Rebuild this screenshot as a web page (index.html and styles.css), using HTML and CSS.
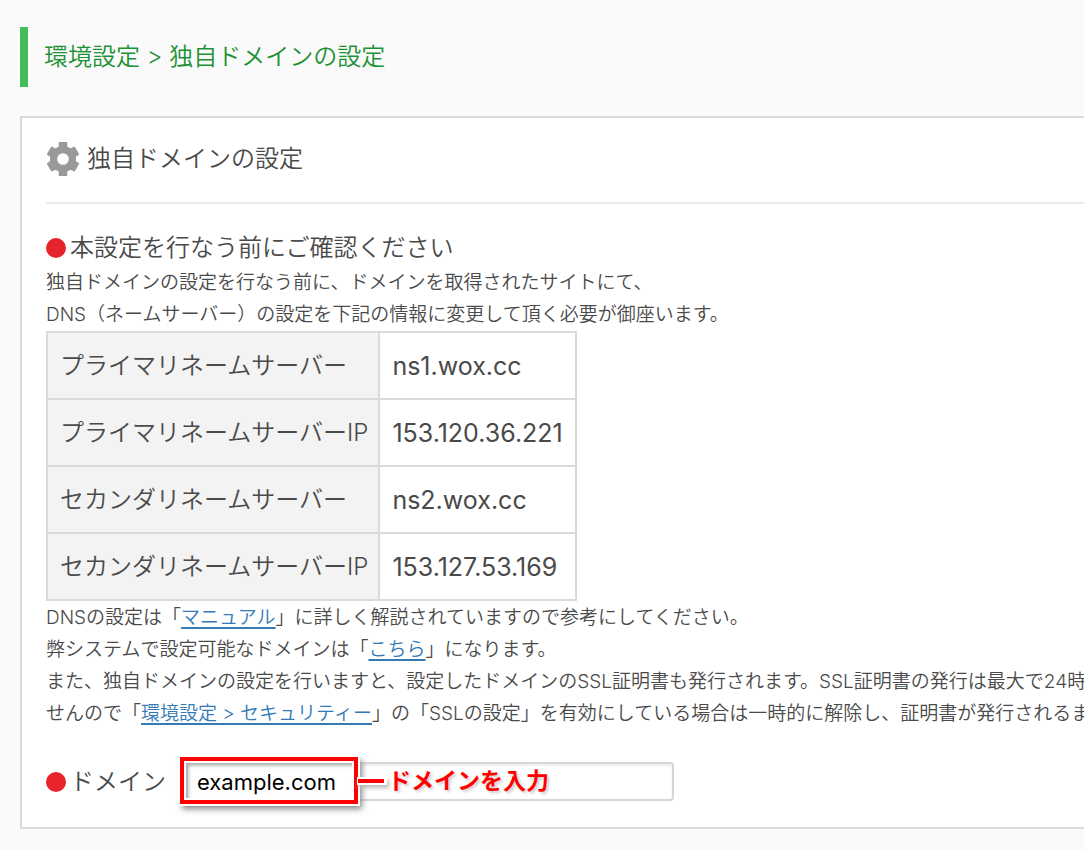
FILE: index.html
```html
<!DOCTYPE html>
<html lang="ja">
<head>
<meta charset="utf-8">
<title>独自ドメインの設定</title>
<link rel="stylesheet" href="styles.css">
</head>
<body>
<header class="page-header">
  <h1 class="page-title">環境設定 &gt; 独自ドメインの設定</h1>
</header>
<main class="card">
  <div class="card-head">
    <svg class="gear" viewBox="0 0 32 32" aria-hidden="true">
      <path fill="#999" fill-rule="evenodd" d="M12 .8Q12 0 12.8 0H19.200Q20 0 20 .8V4.200L23.200 6L26 4.400Q26.800 4 27.300 4.700L31 11Q31.400 11.800 30.700 12.200L28.200 13.800V18.200L30.700 19.800Q31.400 20.200 31 21L27.300 27.300Q26.800 28 26 27.600L23.200 26L20 27.800V31.200Q20 32 19.200 32H12.800Q12 32 12 31.200V27.800L8.800 26L6 27.600Q5.200 28 4.700 27.300L1 21Q.6 20.200 1.300 19.800L3.800 18.200V13.800L1.300 12.200Q.6 11.800 1 11L4.700 4.700Q5.200 4 6 4.400L8.800 6L12 4.200ZM16 10.500A5.500 5.500 0 1 0 16 21.500A5.500 5.500 0 1 0 16 10.500Z"/>
    </svg>
    <h2 class="heading">独自ドメインの設定</h2>
  </div>
  <section class="notice">
    <h3 class="heading marked">本設定を行なう前にご確認ください</h3>
    <p class="text">独自ドメインの設定を行なう前に、ドメインを取得されたサイトにて、<br>DNS（ネームサーバー）の設定を下記の情報に変更して頂く必要が御座います。</p>
    <table class="servers">
      <tr><th scope="row">プライマリネームサーバー</th><td>ns1.wox.cc</td></tr>
      <tr><th scope="row">プライマリネームサーバーIP</th><td>153.120.36.221</td></tr>
      <tr><th scope="row">セカンダリネームサーバー</th><td>ns2.wox.cc</td></tr>
      <tr><th scope="row">セカンダリネームサーバーIP</th><td>153.127.53.169</td></tr>
    </table>
    <p class="text">DNSの設定は「<a href="#manual">マニュアル</a>」に詳しく解説されていますので参考にしてください。<br>弊システムで設定可能なドメインは「<a href="#domains">こちら</a>」になります。<br>また、独自ドメインの設定を行いますと、設定したドメインのSSL証明書も発行されます。SSL証明書の発行は最大で24時<br>せんので「<a href="#security">環境設定 &gt; セキュリティー</a>」の「SSLの設定」を有効にしている場合は一時的に解除し、証明書が発行されるま</p>
  </section>
  <form class="domain-row">
    <label class="heading marked" for="domain">ドメイン</label>
    <div class="field">
      <input class="domain-input" id="domain" type="text" value="example.com">
      <div class="callout">
        <span class="callout-box"></span>
        <span class="callout-line"></span>
        <span class="callout-text">ドメインを入力</span>
      </div>
    </div>
  </form>
</main>
</body>
</html>
```
FILE: styles.css
```css
* { box-sizing: border-box; }

body {
  margin: 0;
  padding: 27px 0 20px 20px;
  overflow-x: hidden;
  background: #fafafa;
  color: #4a4a4a;
  font-family: Inter, "Noto Sans CJK JP", sans-serif;
  font-weight: 350;
}

h1, h2, h3, p { margin: 0; font-weight: 350; }

.page-header {
  display: flex;
  align-items: center;
  height: 60px;
  padding-left: 16px;
  border-left: 8px solid #42bd5a;
}

.page-title {
  color: #1c9135;
  font-size: 24px;
  line-height: 32px;
}

.card {
  margin-top: 29px;
  padding: 23px 0 26px 24px;
  border: 2px solid #dadada;
  border-right: 0;
  background: #fff;
}

.card-head {
  display: flex;
  align-items: center;
  gap: 7px;
  padding-bottom: 25px;
  border-bottom: 2px solid #ebebeb;
}

.gear { width: 34px; height: 34px; }

.heading {
  font-size: 24px;
  line-height: 36px;
}

.marked {
  display: flex;
  align-items: center;
  gap: 4px;
}

.marked::before {
  content: "";
  width: 20px;
  height: 20px;
  border-radius: 50%;
  background: #e7242b;
}

.notice { padding-top: 26px; }

.text {
  margin-top: 1px;
  font-size: 19px;
  line-height: 32px;
  white-space: nowrap;
}

.text a {
  color: #337ab7;
  text-decoration: underline;
  text-decoration-thickness: 2px;
  text-underline-offset: 3px;
}

.servers { border-collapse: collapse; }

.servers th,
.servers td {
  height: 67px;
  padding: 0 12px;
  border: 2px solid #dadada;
  font-size: 24px;
  font-weight: 350;
  line-height: 36px;
  text-align: left;
}

.servers th {
  padding-right: 10px;
  background: #f3f3f3;
}

.servers td {
  font-size: 25px;
  font-weight: 400;
}

.domain-row {
  display: flex;
  align-items: center;
  gap: 20px;
  margin-top: 32px;
}

.field { position: relative; }

.domain-input {
  display: block;
  width: 488px;
  height: 39px;
  padding: 0 9px;
  border: 2px solid #d6d6d6;
  border-radius: 4px;
  background: #fff;
  box-shadow: inset 0 2px 2px #eee;
  color: #000;
  font-family: inherit;
  font-size: 22px;
  font-weight: 400;
}

.callout {
  position: absolute;
  top: -5px;
  left: -6px;
  display: flex;
  align-items: center;
  pointer-events: none;
}

.callout-box {
  width: 178px;
  height: 47px;
  border: 4px solid #f00;
  outline: 2px solid #fff;
  box-shadow: inset 0 0 0 2px #fff, inset 3px 3px 4px 1px #aaa, 3px 4px 6px 1px #888;
}

.callout-line {
  z-index: 1;
  width: 26px;
  height: 4px;
  background: #f00;
  box-shadow: 1px 0 0 2px #fff, 3px 3px 4px 2px #bbb;
}

.callout-text {
  padding-left: 4px;
  color: #f00;
  font-size: 23px;
  font-weight: 700;
  line-height: 36px;
  white-space: nowrap;
  paint-order: stroke fill;
  -webkit-text-stroke: 7px #fff;
  text-shadow: 2px 2px 3px #ccc;
}
```
